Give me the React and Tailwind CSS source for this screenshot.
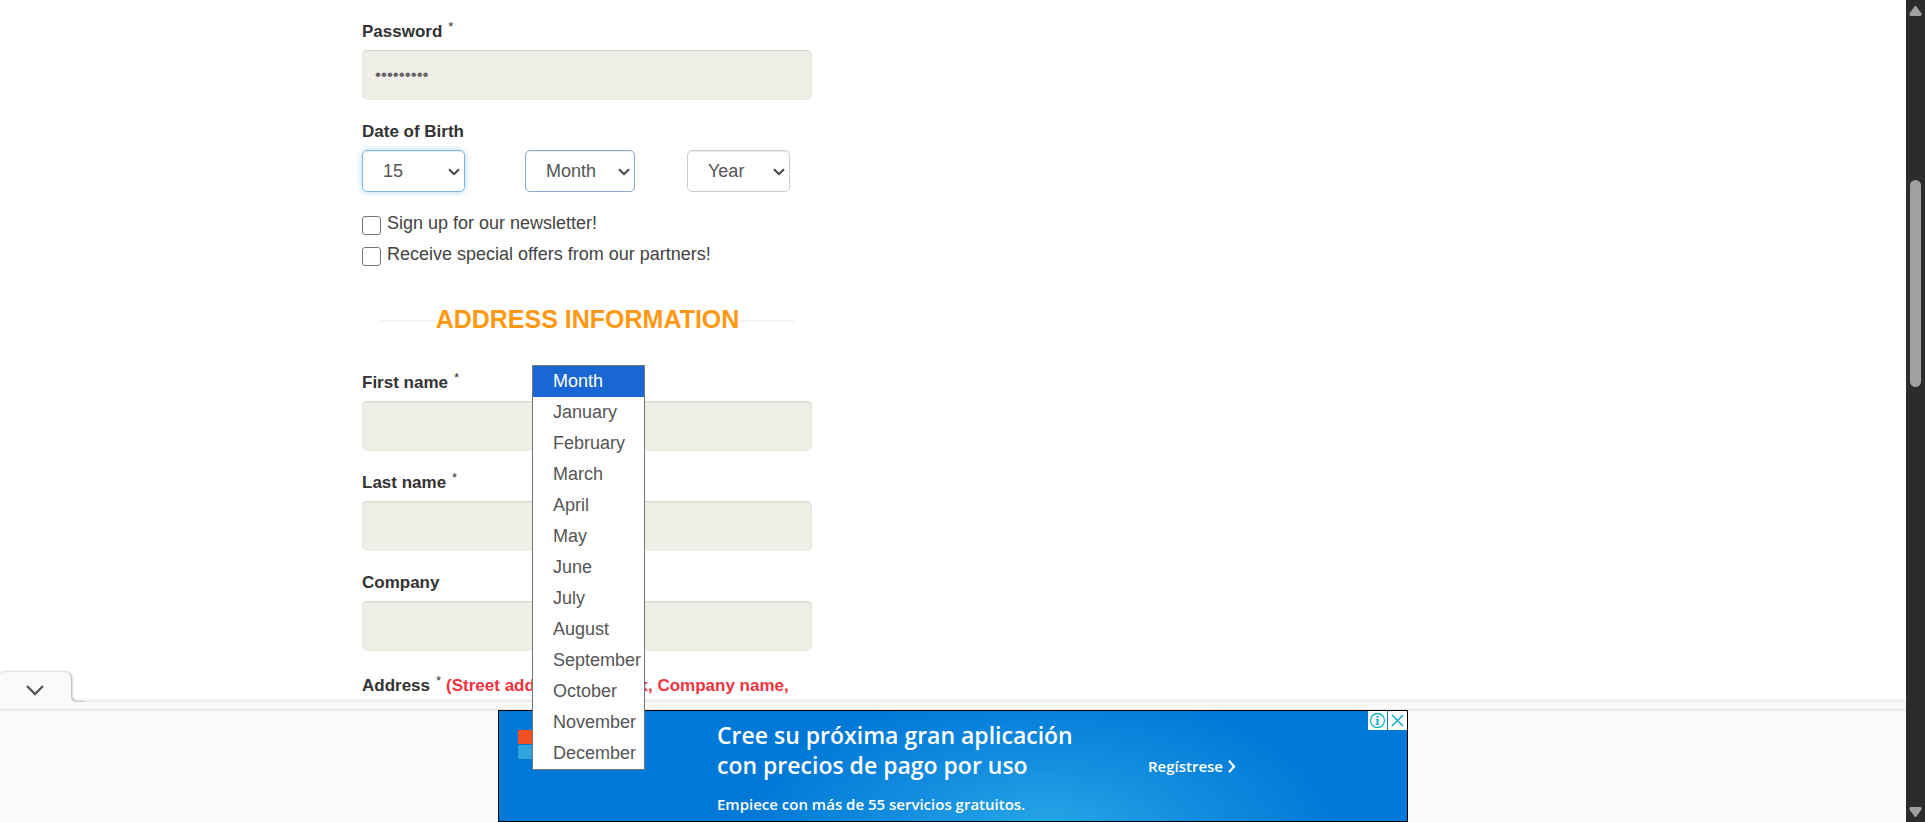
import React from "react";

const MONTHS = [
  "January", "February", "March", "April", "May", "June",
  "July", "August", "September", "October", "November", "December",
];

function Label({ htmlFor, children, required, note }) {
  return (
    <label htmlFor={htmlFor} className="block h-[30px] overflow-visible text-[17px] leading-6 font-bold whitespace-nowrap text-[#333]">
      {children}
      {required && <sup className="ml-[6px] text-[13px] leading-none font-normal">*</sup>}
      {note && <span className="ml-[5px] text-[#f13340]">{note}</span>}
    </label>
  );
}

function TextField({ id, label, type = "text", value, required }) {
  return (
    <div className="mb-5">
      <Label htmlFor={id} required={required}>{label}</Label>
      <input
        id={id}
        type={type}
        defaultValue={value}
        className="block h-[50px] w-full rounded-[5px] bg-[#efefe7] px-[13px] text-[17px] text-[#666] shadow-[inset_0_1px_2px_rgba(0,0,0,0.12)] outline-none"
      />
    </div>
  );
}

function SelectBox({ id, label, value, options, className, children }) {
  return (
    <div className={`relative ${className}`}>
      <select
        id={id}
        aria-label={label}
        defaultValue={value}
        className="h-[42px] w-full appearance-none rounded-[5px] border border-inherit bg-white pl-5 text-[18px] text-[#555] shadow-[inset_0_1px_1px_rgba(0,0,0,0.08)] outline-none"
      >
        {options.map((o) => <option key={o}>{o}</option>)}
      </select>
      <svg className="pointer-events-none absolute top-[18px] right-[5px]" width="12" height="8" viewBox="0 0 12 8" fill="none" stroke="#444" strokeWidth="2">
        <path d="M1 1.2 6 6.2 11 1.2" />
      </svg>
      {children}
    </div>
  );
}

function Check({ id, children }) {
  return (
    <div className="flex h-[31px] items-start">
      <input id={id} type="checkbox" className="mt-[5px] size-[19px] shrink-0 appearance-none rounded-[3px] border border-[#767676] bg-white" />
      <label htmlFor={id} className="ml-[6px] text-[18px] leading-6 whitespace-nowrap text-[#434343]">{children}</label>
    </div>
  );
}

function MonthMenu() {
  return (
    <ul role="listbox" aria-label="Month options" className="absolute top-[215px] left-[7px] z-20 w-[113px] border border-[#767676] bg-white text-[18px] leading-[31px] text-[#555]">
      <li role="option" aria-selected="true" className="bg-[#1967d2] pl-5 text-white">Month</li>
      {MONTHS.map((m) => (
        <li key={m} role="option" aria-selected="false" className="pl-5">{m}</li>
      ))}
    </ul>
  );
}

function AdBanner() {
  return (
    <div className="relative flex h-[112px] w-[910px] border border-black bg-[#0078d7] bg-[radial-gradient(ellipse_300px_150px_at_545px_125px,#27a9e8_0%,#1590e0_45%,#0078d7_100%)] text-white">
      <svg className="mt-[19px] ml-[19px] shrink-0" width="30" height="30" viewBox="0 0 30 30" aria-hidden="true">
        <path fill="#f25022" d="M0 0h14v14H0z" />
        <path fill="#7fba00" d="M15 0h14v14H15z" />
        <path fill="#2ea3dc" d="M0 15h14v14H0z" />
        <path fill="#ffb900" d="M15 15h14v14H15z" />
      </svg>
      <div className="ml-[169px] w-[431px] pt-[9px] font-['Open_Sans',sans-serif] font-semibold whitespace-nowrap">
        <p className="text-[23px] leading-[30px]">Cree su próxima gran aplicación<br />con precios de pago por uso</p>
        <p className="mt-[14px] text-[15px] leading-5">Empiece con más de 55 servicios gratuitos.</p>
      </div>
      <a href="#registrese" className="mt-[45px] flex h-5 items-center gap-[5px] font-['Open_Sans',sans-serif] text-[15px] leading-5 font-semibold">
        Regístrese
        <svg width="8" height="13" viewBox="0 0 8 13" fill="none" stroke="#fff" strokeWidth="2.2"><path d="M1 .8 6 6.5 1 12.2" /></svg>
      </a>
      <div className="absolute top-0 right-0 flex gap-px">
        <button aria-label="Ad information" className="flex size-[19px] items-center justify-center bg-white">
          <svg width="17" height="17" viewBox="0 0 17 17" fill="none" stroke="#14aed0" strokeWidth="1.3">
            <circle cx="8.5" cy="8.5" r="7" />
            <path strokeWidth="2" d="M8.5 3.8v2M8.5 7v5.6" />
            <path strokeWidth="1" d="M6.8 7.4h2M6.6 12.4h3.8" />
          </svg>
        </button>
        <button aria-label="Close ad" className="flex size-[19px] items-center justify-center bg-white">
          <svg width="15" height="15" viewBox="0 0 15 15" stroke="#14aed0" strokeWidth="1.6"><path d="M2 2l11 11M13 2 2 13" /></svg>
        </button>
      </div>
    </div>
  );
}

export default function App() {
  return (
    <div className="flex h-screen overflow-hidden bg-white font-['Liberation_Sans',Arial,sans-serif]">
      <div className="relative min-w-0 flex-1">
        <main className="mx-auto max-w-[1182px]">
          <form className="w-[450px] pt-5">
            <TextField id="password" label="Password" type="password" value="secretpwd" required />
            <Label htmlFor="day">Date of Birth</Label>
            <div className="grid grid-cols-[163px_162px_1fr]">
              <SelectBox id="day" label="Day" value="15" options={["15"]} className="w-[103px] rounded-[5px] border-[#7db4e0] shadow-[0_0_6px_rgba(102,175,233,0.5)]" />
              <SelectBox id="month" label="Month" value="Month" options={["Month", ...MONTHS]} className="w-[110px] border-[#86acd3]">
                <MonthMenu />
              </SelectBox>
              <SelectBox id="year" label="Year" value="Year" options={["Year"]} className="w-[103px] border-[#ccc]" />
            </div>
            <div className="mt-[19px]">
              <Check id="newsletter">Sign up for our newsletter!</Check>
              <Check id="offers">Receive special offers from our partners!</Check>
            </div>
            <div className="mt-[28px] mr-[18px] ml-[19px] flex h-9 items-center">
              <span className="mt-1 h-[2px] flex-1 bg-[#f3f3f3]" />
              <h3 className="text-[25px] leading-9 font-bold whitespace-nowrap text-[#ff9914]">ADDRESS INFORMATION</h3>
              <span className="mt-1 h-[2px] flex-1 bg-[#f3f3f3]" />
            </div>
            <div className="mt-[34px]">
              <TextField id="first" label="First name" required />
              <TextField id="last" label="Last name" required />
              <TextField id="company" label="Company" />
              <div className="pt-[3px]">
                <Label required note="(Street address, P.O. Box, Company name,">Address</Label>
              </div>
            </div>
          </form>
        </main>

        <footer className="absolute inset-x-0 bottom-0 z-10 bg-[#fafafa] pt-[7px] shadow-[0_-1px_4px_rgba(0,0,0,0.15)]">
          <button aria-label="Hide ad" className="absolute -top-[32px] left-0 h-9 w-[84px]">
            <svg width="84" height="36" viewBox="0 0 84 36" fill="none" className="block overflow-hidden">
              <path className="drop-shadow-[1px_0_1px_rgba(0,0,0,0.35)]" fill="#fafafa" d="M-4 40V8Q-2 2 5 2H64Q71 2 71 9V26Q71 32 78 32H90V40Z" />
              <path stroke="#58585a" strokeWidth="2.4" d="M27 16 35 24 43 16" />
            </svg>
          </button>
          <div className="flex justify-center pt-px shadow-[inset_0_3px_2px_-2px_rgba(0,0,0,0.12)]">
            <AdBanner />
          </div>
        </footer>
      </div>

      <div aria-hidden="true" className="flex w-[19px] shrink-0 flex-col items-center bg-[#2c2c2c]">
        <svg className="mt-[5px]" width="13" height="12" viewBox="0 0 13 12"><path fill="#a0a0a0" d="M5.3 1.8Q6.5.2 7.7 1.8L12.5 8.6Q13 11 11.4 11H1.6Q0 11 .5 8.6Z" /></svg>
        <div className="mt-[163px] h-[207px] w-[11px] rounded-full bg-[#a0a0a0]" />
        <svg className="mt-auto mb-1" width="13" height="12" viewBox="0 0 13 12"><path fill="#a0a0a0" d="M5.3 10.2Q6.5 11.8 7.7 10.2L12.5 3.4Q13 1 11.4 1H1.6Q0 1 .5 3.4Z" /></svg>
      </div>
    </div>
  );
}
